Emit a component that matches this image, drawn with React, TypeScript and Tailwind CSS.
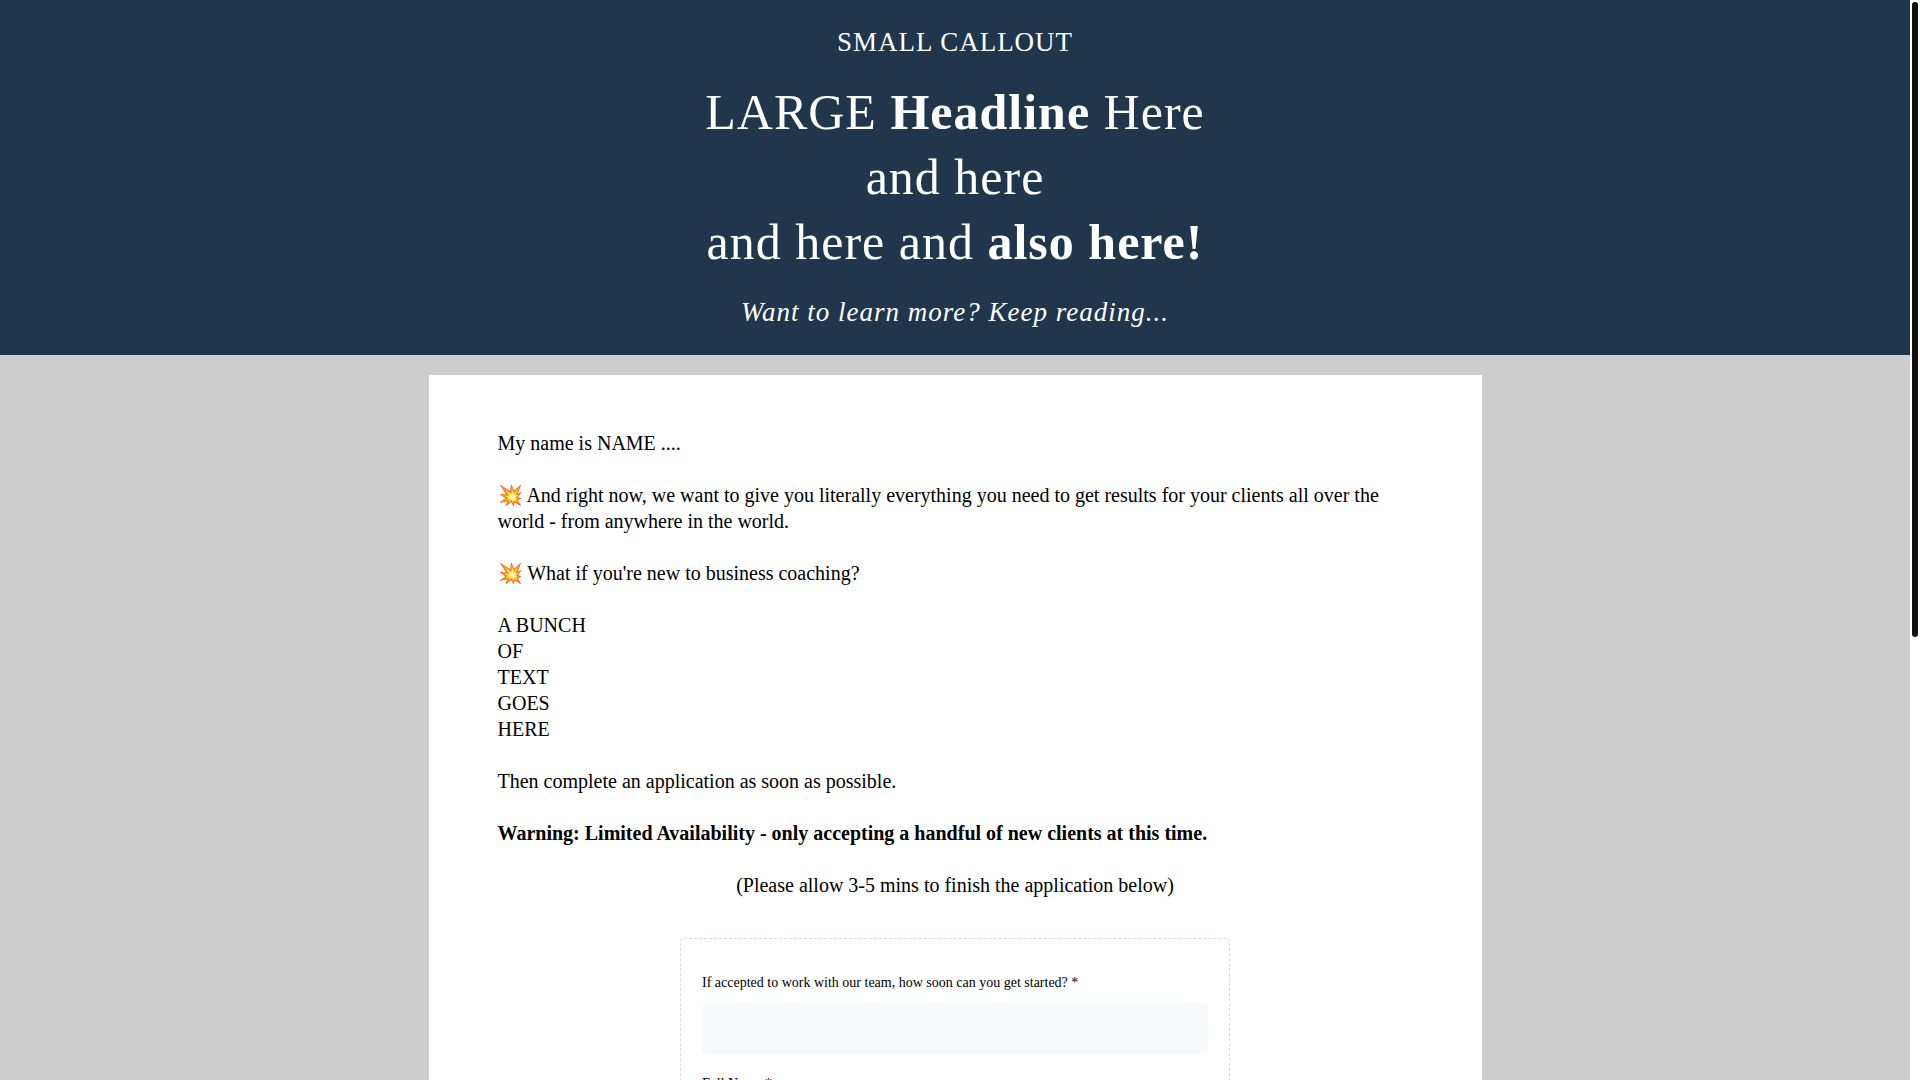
import { useId } from 'react';

const bunch = ['A BUNCH', 'OF', 'TEXT', 'GOES', 'HERE'];

const fields = [
  { name: 'start', label: 'If accepted to work with our team, how soon can you get started? *' },
  { name: 'fullName', label: 'Full Name *' },
];

function Field({ name, label }: { name: string; label: string }) {
  const id = useId();

  return (
    <div className="flex flex-col gap-[11px]">
      <label htmlFor={id} className="text-[14px] leading-[18px]">
        {label}
      </label>
      <input
        id={id}
        name={name}
        type="text"
        className="h-[51px] w-full rounded-[5px] bg-[#f6fafd] px-4 outline-none"
      />
    </div>
  );
}

export default function App() {
  return (
    <div className="flex h-screen overflow-hidden bg-white font-['Liberation_Serif',serif] text-black">
      <div className="min-w-0 flex-1 overflow-hidden bg-[#cdcdcd]">
        {/* Hero */}
        <header className="flex flex-col gap-5 bg-[#20364d] px-5 py-[25px] text-center tracking-[1px] text-white">
          <p className="text-[27px] leading-[35px]">SMALL CALLOUT</p>
          <h1 className="text-[50px] leading-[65px]">
            LARGE <strong>Headline</strong> Here
            <br />
            and here
            <br />
            and here and <strong>also here!</strong>
          </h1>
          <p className="text-[27px] italic leading-[35px]">Want to learn more? Keep reading...</p>
        </header>

        {/* Letter */}
        <main className="mx-auto mt-5 max-w-[1053px] bg-white px-[69px] py-[55px]">
          <div className="flex flex-col gap-[26px] text-[20px] leading-[26px]">
            <p>My name is NAME ....</p>
            <p>
              💥 And right now, we want to give you literally everything you need to get results for
              your clients all over the world - from anywhere in the world.
            </p>
            <p>💥 What if you're new to business coaching?</p>
            <div>
              {bunch.map((line) => (
                <p key={line}>{line}</p>
              ))}
            </div>
            <p>Then complete an application as soon as possible.</p>
            <p className="font-bold">
              Warning: Limited Availability - only accepting a handful of new clients at this time.
            </p>
            <p className="text-center">(Please allow 3-5 mins to finish the application below)</p>
          </div>

          {/* Application form */}
          <form className="mx-auto mt-10 flex max-w-[550px] flex-col gap-[21px] rounded-[4px] border border-dashed border-[#c8dfee] px-[21px] py-[35px]">
            {fields.map((field) => (
              <Field key={field.name} name={field.name} label={field.label} />
            ))}
          </form>
        </main>
      </div>

      {/* Scroll track */}
      <div className="w-[10px] shrink-0 bg-white p-[2px]">
        <div className="h-[59%] rounded-full bg-[#111111]" />
      </div>
    </div>
  );
}
